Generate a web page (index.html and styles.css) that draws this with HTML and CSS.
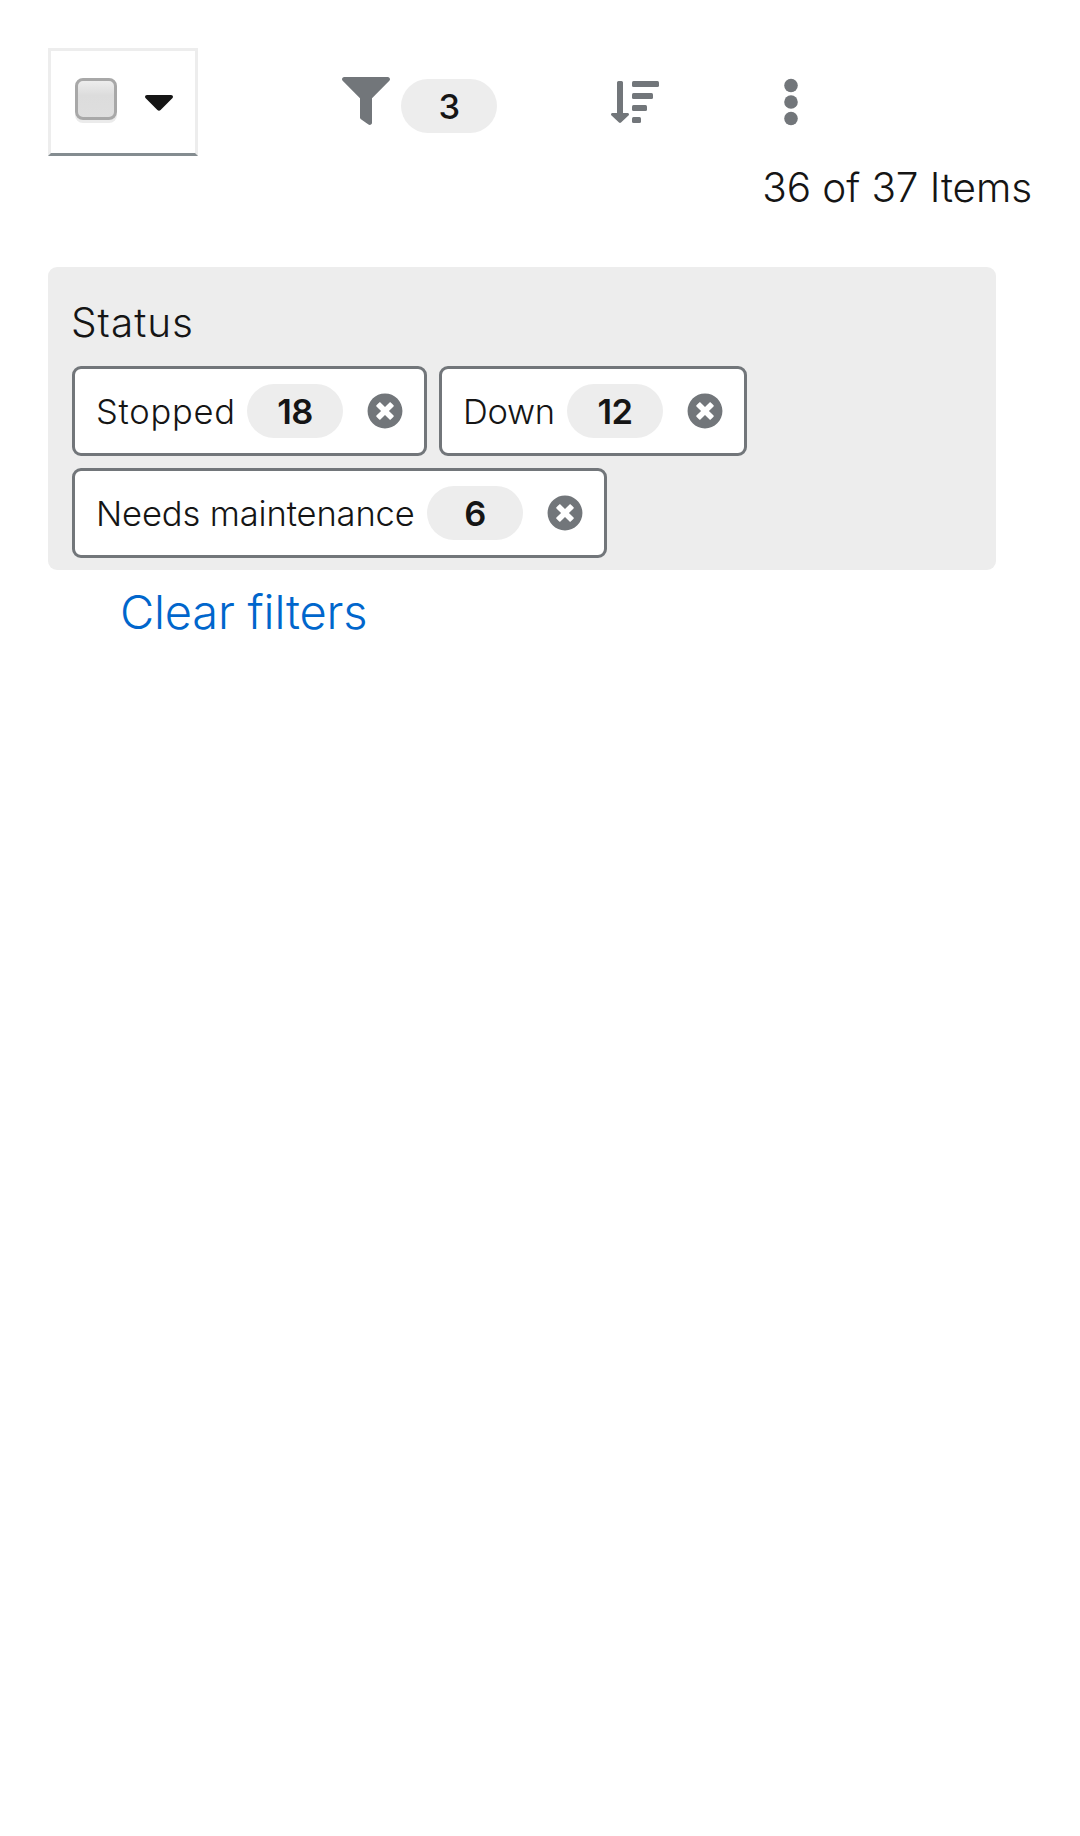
FILE: index.html
```html
<!DOCTYPE html>
<html lang="en">
<head>
<meta charset="utf-8">
<title>Toolbar filters</title>
<link rel="stylesheet" href="styles.css">
</head>
<body>
<svg class="sprite" aria-hidden="true">
  <symbol id="times" viewBox="0 0 512 512"><path d="M256 8C119 8 8 119 8 256s111 248 248 248 248-111 248-248S393 8 256 8zm121.600 313.100c4.700 4.700 4.700 12.300 0 17L338 377.600c-4.700 4.700-12.300 4.700-17 0L256 312l-65.100 65.600c-4.700 4.700-12.300 4.700-17 0L134.400 338c-4.700-4.700-4.700-12.300 0-17l65.600-65-65.600-65.100c-4.700-4.700-4.700-12.300 0-17l39.600-39.600c4.700-4.700 12.300-4.700 17 0l65 65.700 65.100-65.600c4.700-4.700 12.300-4.700 17 0l39.600 39.600c4.700 4.700 4.700 12.300 0 17L312 256l65.600 65.100z"/></symbol>
</svg>
<div class="toolbar">
  <div class="select-toggle">
    <span class="checkbox"></span>
    <svg class="caret" viewBox="0 0 28 16"><path d="M2 0h24q2 0 2 1.700 0 .8-.7 1.500L15.600 15q-1.600 1.600-3.200 0L.7 3.200Q0 2.500 0 1.700 0 0 2 0z"/></svg>
  </div>
  <div class="filter-toggle">
    <svg class="icon" viewBox="0 0 512 512"><path d="M487.976 0H24.028C2.710 0-8.047 25.866 7.058 40.971L192 225.941V432c0 7.831 3.821 15.170 10.237 19.662l80 55.980C298.020 518.690 320 507.493 320 487.980V225.941l184.947-184.970C520.021 25.896 509.338 0 487.976 0z"/></svg>
    <span class="badge badge-read">3</span>
  </div>
  <svg class="icon sort" viewBox="0 0 48 48">
    <path d="M7.500 3h3q1.500 0 1.500 1.500V35h4.500c1.400 0 2 1.600 1 2.600l-7.500 7q-1 .8-2 0l-7.500-7c-1-1-.4-2.600 1-2.600H6V4.500Q6 3 7.500 3z"/>
    <rect x="21" y="3" width="27" height="6" rx="1.500"/><rect x="21" y="15" width="21" height="6" rx="1.500"/><rect x="21" y="27" width="15" height="6" rx="1.500"/><rect x="21" y="39" width="9" height="6" rx="1.500"/>
  </svg>
  <svg class="kebab" viewBox="0 0 14 48"><circle cx="7" cy="7.500" r="6.800"/><circle cx="7" cy="24" r="6.800"/><circle cx="7" cy="40.500" r="6.800"/></svg>
</div>
<div class="count">36 of 37 Items</div>
<div class="chip-group">
  <div class="group-label">Status</div>
  <div class="chips">
    <div class="chip"><span class="chip-text stopped">Stopped</span><span class="badge">18</span><svg class="close"><use href="#times"/></svg></div>
    <div class="chip"><span class="chip-text down">Down</span><span class="badge">12</span><svg class="close"><use href="#times"/></svg></div>
    <div class="chip"><span class="chip-text maintenance">Needs maintenance</span><span class="badge">6</span><svg class="close"><use href="#times"/></svg></div>
  </div>
</div>
<a class="clear">Clear filters</a>
</body>
</html>
```
FILE: styles.css
```css
* { box-sizing: border-box; }
body {
  margin: 0;
  padding: 48px;
  min-height: 1836px;
  background: #fff;
  color: #151515;
  font-family: Inter, "Open Sans", sans-serif;
  font-weight: 300;
  font-size: 40.5px;
}
svg { display: block; fill: #72767a; flex: none; }
.sprite { width: 0; height: 0; position: absolute; }
.toolbar { display: flex; align-items: flex-start; height: 108px; }
.select-toggle {
  display: flex;
  gap: 28px;
  width: 150px;
  height: 108px;
  padding: 27px 0 0 24px;
  border: 3px solid #ededed;
  border-bottom-color: #848c90;
}
.checkbox {
  width: 42px;
  height: 42px;
  border: 3px solid #a8a8a8;
  border-radius: 8px;
  background: linear-gradient(#ededed, #dcdcdc 40%, #dedede);
  box-shadow: 0 3px 0 #ebebeb;
}
.caret { width: 28px; height: 16px; margin-top: 17px; fill: #151515; }
.filter-toggle { display: flex; gap: 11px; margin: 29px 0 0 144px; }
.icon { width: 48px; height: 48px; }
.badge {
  width: 96px;
  height: 54px;
  border-radius: 27px;
  background: #ededed;
  text-align: center;
  font-size: 34.5px;
  font-weight: 600;
  letter-spacing: -.6px;
  line-height: 56px;
}
.badge-read { margin-top: 2px; font-weight: 500; }
.sort { margin: 30px 0 0 114px; }
.kebab { width: 14px; height: 48px; margin: 30px 0 0 125px; }
.count { height: 63px; line-height: 63px; text-align: right; letter-spacing: -.1px; }
.chip-group {
  width: 948px;
  height: 303px;
  margin-top: 48px;
  padding: 24px;
  border-radius: 9px;
  background: #ededed;
}
.group-label { height: 63px; line-height: 63px; margin: 0 0 12px -1px; letter-spacing: 1px; }
.chips { display: flex; flex-wrap: wrap; gap: 12px; }
.chip {
  display: flex;
  align-items: center;
  height: 90px;
  padding: 0 21px;
  border: 3px solid #72767a;
  border-radius: 9px;
  background: #fff;
  font-size: 34.5px;
}
.chip-text { white-space: nowrap; margin-right: 12px; }
.stopped { width: 139px; letter-spacing: .75px; }
.down { width: 92px; letter-spacing: -.3px; }
.maintenance { width: 319px; letter-spacing: -.12px; }
.close { width: 36px; height: 36px; margin-left: 24px; }
.clear { display: block; padding: 6px 0 0 72px; color: #06c; font-size: 47px; line-height: 72px; letter-spacing: -.2px; }
```
